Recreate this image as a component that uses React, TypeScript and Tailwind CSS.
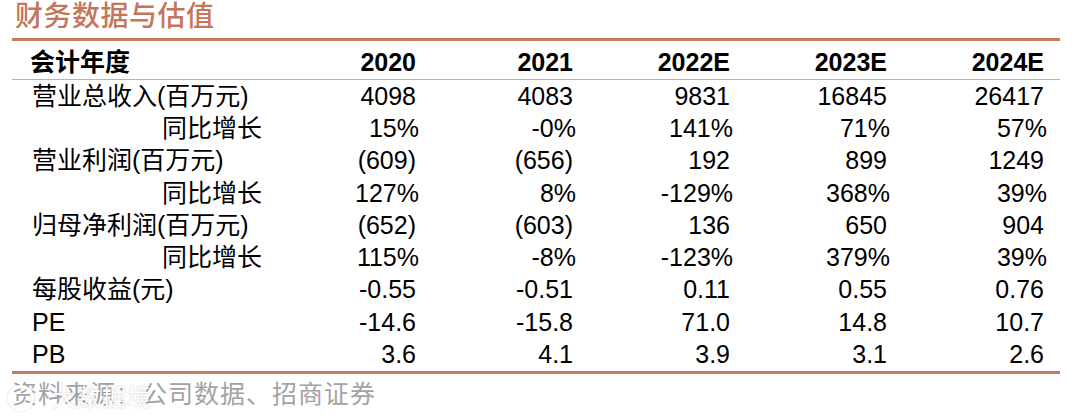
import React from 'react';

const rows: { label: string; indent?: boolean; values: string[] }[] = [
  { label: '营业总收入(百万元)', values: ['4098', '4083', '9831', '16845', '26417'] },
  { label: '同比增长', indent: true, values: ['15%', '-0%', '141%', '71%', '57%'] },
  { label: '营业利润(百万元)', values: ['(609)', '(656)', '192', '899', '1249'] },
  { label: '同比增长', indent: true, values: ['127%', '8%', '-129%', '368%', '39%'] },
  { label: '归母净利润(百万元)', values: ['(652)', '(603)', '136', '650', '904'] },
  { label: '同比增长', indent: true, values: ['115%', '-8%', '-123%', '379%', '39%'] },
  { label: '每股收益(元)', values: ['-0.55', '-0.51', '0.11', '0.55', '0.76'] },
  { label: 'PE', values: ['-14.6', '-15.8', '71.0', '14.8', '10.7'] },
  { label: 'PB', values: ['3.6', '4.1', '3.9', '3.1', '2.6'] },
];

const years = ['2020', '2021', '2022E', '2023E', '2024E'];

export default function App() {
  return (
    <div
      className="w-[1080px] h-[418px] bg-white overflow-hidden"
      style={{ fontFamily: '"Liberation Sans", "Noto Sans CJK SC", sans-serif' }}
    >
      <div className="ml-[12px] w-[1048px]">
        {/* title */}
        <div className="h-[38px] flex items-start pl-[3px] pt-[1px] text-[28px] leading-[32px] font-medium text-[#c3765a] tracking-[0.5px]">
          财务数据与估值
        </div>

        {/* table */}
        <div className="border-t-[3px] border-b-[3px] border-[#c67b5e]">
          <div className="grid grid-cols-[1fr_157px_157px_157px_157px_157px] pl-[18px] pr-[16px] h-[39px] items-center pt-[3px] border-b border-[#d9a792] text-[25px] font-bold text-black">
            <div className="whitespace-nowrap">会计年度</div>
            {years.map(y => (
              <div key={y} className="text-right">{y}</div>
            ))}
          </div>
          {rows.map((r, i) => (
            <div
              key={i}
              className="grid grid-cols-[1fr_157px_157px_157px_157px_157px] pl-[18px] pr-[16px] h-[32.3px] items-center text-[25px] leading-none text-black"
            >
              <div className={`whitespace-nowrap ${r.indent ? 'pl-[132px]' : 'pl-[2px]'}`}>{r.label}</div>
              {r.values.map((v, j) => (
                <div key={j} className="text-right">{v}</div>
              ))}
            </div>
          ))}
        </div>

        {/* source */}
        <div className="relative h-[40px] flex items-center pt-[2px] text-[25px] text-[#a3a3a3] tracking-[1px]">
          资料来源：公司数据、招商证券
          <div className="absolute left-[-4px] top-[6px] flex items-center gap-[6px] text-white text-[24px] [text-shadow:0_0_2px_rgba(0,0,0,0.25)]">
            <span className="w-[26px] h-[26px] rounded-full border-[3px] border-white [box-shadow:0_0_2px_rgba(0,0,0,0.25)]" />
            <span className="ml-[12px]">大数据境</span>
          </div>
        </div>
      </div>
    </div>
  );
}
